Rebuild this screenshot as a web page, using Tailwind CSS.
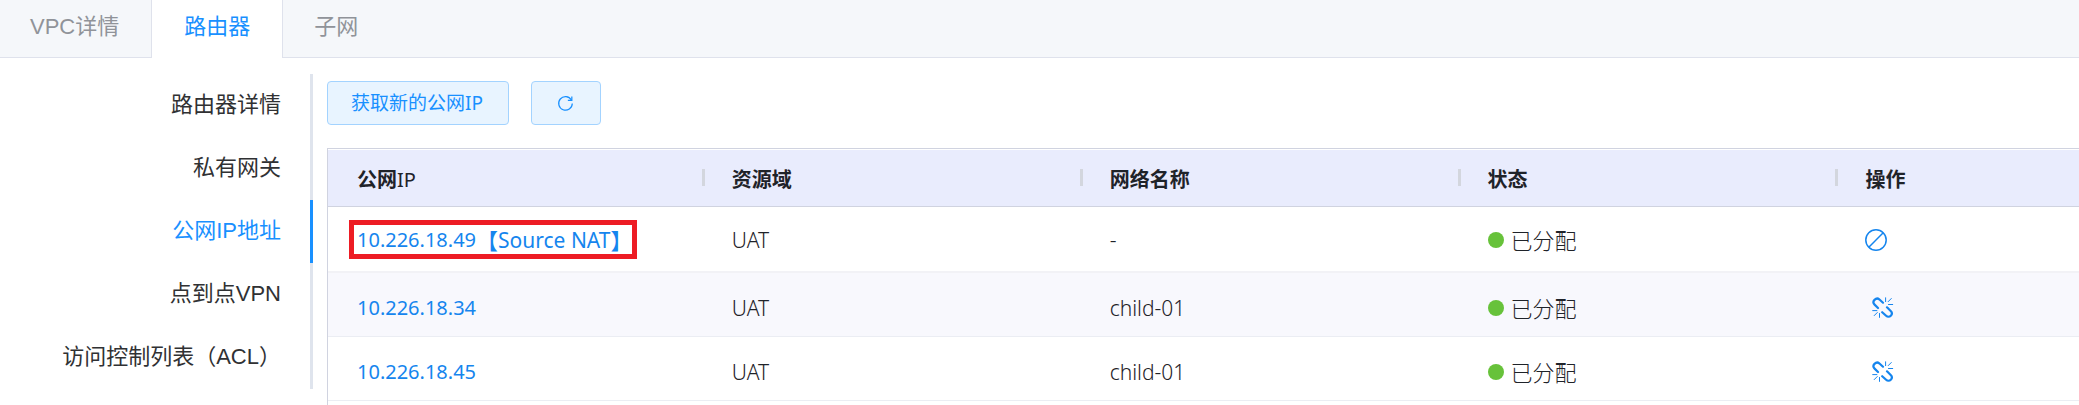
<!DOCTYPE html>
<html lang="zh-CN">
<head>
<meta charset="utf-8">
<meta name="viewport" content="width=device-width, initial-scale=1">
<title>VPC</title>
<script src="https://cdn.jsdelivr.net/npm/@tailwindcss/browser@4"></script>
</head>
<body class="bg-white">
<svg class="hidden" aria-hidden="true">
  <symbol id="unlink" viewBox="0 0 22 22">
    <g fill="none" stroke="currentColor" stroke-linecap="round">
      <path stroke-width="2.2" d="M6 11 2.600 7.600C1.200 6.200 1.200 4.200 2.500 2.900S5.900 1.200 7.200 2.300L11 5.700M15 10.300l3.700 3.700c1.400 1.400 1.400 3.400.1 4.700s-3.400 1.200-4.700 0L10.200 15.200"/>
      <path stroke-width="1" d="M13.600.8v3.800M19.300 1.500l-3.100 3.100M16.500 7.500h4.200M.7 13.600h4.200M5.300 15.500l-3.100 3.100M7.500 16.500v3.900"/>
    </g>
  </symbol>
</svg>
<div class="flex min-h-screen flex-col font-['Liberation_Sans','Noto_Sans_CJK_SC',sans-serif] text-[22px] leading-8">
  <nav class="flex h-[58px] bg-[#f5f7fa] text-[#909399]" aria-label="VPC">
    <a href="#vpc" class="border-b border-[#dfe2ec] pt-[11px] pr-8 pl-[30px]">VPC详情</a>
    <a href="#router" aria-current="page" class="border-x border-[#dfe2ec] bg-white px-8 pt-[11px] text-[#1890ff]">路由器</a>
    <a href="#subnet" class="flex-1 border-b border-[#dfe2ec] pt-[11px] pl-[31px]">子网</a>
  </nav>
  <div class="flex flex-1">
    <aside class="mt-4 w-[313px] shrink-0 self-start text-right text-[#303133]">
      <ul>
        <li><a href="#detail" class="block h-[63px] border-r-3 border-[#dfe4ed] pt-[15px] pr-[29px]">路由器详情</a></li>
        <li><a href="#gateway" class="block h-[63px] border-r-3 border-[#dfe4ed] pt-[15px] pr-[29px]">私有网关</a></li>
        <li><a href="#ip" aria-current="page" class="block h-[63px] border-r-3 border-[#1890ff] pt-[15px] pr-[29px] text-[#1890ff]">公网IP地址</a></li>
        <li><a href="#vpn" class="block h-[63px] border-r-3 border-[#dfe4ed] pt-[15px] pr-[29px]">点到点VPN</a></li>
        <li><a href="#acl" class="block h-[63px] border-r-3 border-[#dfe4ed] pt-[15px] pr-[29px]">访问控制列表（ACL）</a></li>
      </ul>
    </aside>
    <main class="flex min-w-0 flex-1 flex-col pt-[23px] pl-[14px] font-['Noto_Sans','Noto_Sans_CJK_SC',sans-serif] text-[#1f2329]">
      <div class="flex gap-[22px] text-[19px] text-[#1890ff]">
        <button type="button" class="h-11 rounded border border-[#a3d3ff] bg-[#e8f4ff] pr-[25px] pl-[23px] leading-6">获取新的公网IP</button>
        <button type="button" aria-label="刷新" class="flex h-11 w-[70px] items-center justify-center rounded border border-[#a3d3ff] bg-[#e8f4ff]">
          <svg class="size-[17px]" viewBox="0 0 18 18" fill="none" stroke="currentColor" stroke-width="1.300"><path d="M15.200 5.200A7.200 7.200 0 1 0 16.200 9"/><path d="M15.700 1.600v4.200h-4.200"/></svg>
        </button>
      </div>
      <div class="mt-[23px] flex-1 border-t border-l border-[#d0d3e0] pt-px">
        <table class="w-full table-fixed text-left text-[21px]">
          <colgroup><col class="w-[21.58%]"><col class="w-[21.58%]"><col class="w-[21.58%]"><col class="w-[21.58%]"><col></colgroup>
          <thead>
            <tr class="h-14 border-b border-[#d0d3e0] bg-[#e9ecfd] text-xl leading-6">
              <th scope="col" class="pr-px pl-[29px]"><div class="flex items-center justify-between"><span class="pt-1">公网<span class="font-normal">IP</span></span><span class="h-[17px] w-[3px] bg-[#d3d6de]"></span></div></th>
              <th scope="col" class="pr-px pl-[26px]"><div class="flex items-center justify-between"><span class="pt-1">资源域</span><span class="h-[17px] w-[3px] bg-[#d3d6de]"></span></div></th>
              <th scope="col" class="pr-px pl-[26px]"><div class="flex items-center justify-between"><span class="pt-1">网络名称</span><span class="h-[17px] w-[3px] bg-[#d3d6de]"></span></div></th>
              <th scope="col" class="pr-px pl-[26px]"><div class="flex items-center justify-between"><span class="pt-1">状态</span><span class="h-[17px] w-[3px] bg-[#d3d6de]"></span></div></th>
              <th scope="col" class="pl-[26px]"><span class="block pt-1">操作</span></th>
            </tr>
          </thead>
          <tbody class="leading-[22px] font-light">
            <tr class="h-[66px] border-b-2 border-[#f2f2f6]">
              <td class="pl-[29px] font-normal text-[#1585ee]"><a href="#ip49" class="inline-flex h-[23px] align-middle leading-6 whitespace-nowrap outline-5 outline-offset-3 outline-[#ed1c24]"><span class="text-xl leading-6">10.226.18.49</span><span class="text-[22px]">【</span>Source NAT<span class="-mr-1 text-[22px]">】</span></a></td>
              <td class="pt-0.5 pl-[26px]">UAT</td>
              <td class="pt-0.5 pl-[26px]">-</td>
              <td class="pt-0.5 pl-[26px]"><div class="flex items-center gap-[7px] text-[22px]"><span class="size-4 rounded-full bg-[#67c23a]"></span>已分配</div></td>
              <td class="pt-0.5 pl-[26px] text-[#1585ee]"><button type="button" aria-label="禁用" class="block"><svg class="size-[22px]" viewBox="0 0 22 22" fill="none" stroke="currentColor" stroke-width="1.500"><circle cx="11" cy="11" r="10.200"/><path d="M3.800 18.200 18.200 3.800"/></svg></button></td>
            </tr>
            <tr class="h-16 border-b border-[#ebedf3] bg-[#f8f8fd]">
              <td class="pt-[7px] pl-[29px] text-xl font-normal"><a href="#ip34" class="text-[#1585ee]">10.226.18.34</a></td>
              <td class="pt-[7px] pl-[26px]">UAT</td>
              <td class="pt-[7px] pl-[26px]">child-01</td>
              <td class="pt-[7px] pl-[26px]"><div class="flex items-center gap-[7px] text-[22px]"><span class="size-4 rounded-full bg-[#67c23a]"></span>已分配</div></td>
              <td class="pt-[7px] pl-[33px] text-[#1585ee]"><button type="button" aria-label="解绑" class="block"><svg class="size-[22px]"><use href="#unlink"/></svg></button></td>
            </tr>
            <tr class="h-16 border-b border-[#ebedf3]">
              <td class="pt-[7px] pl-[29px] text-xl font-normal"><a href="#ip45" class="text-[#1585ee]">10.226.18.45</a></td>
              <td class="pt-[7px] pl-[26px]">UAT</td>
              <td class="pt-[7px] pl-[26px]">child-01</td>
              <td class="pt-[7px] pl-[26px]"><div class="flex items-center gap-[7px] text-[22px]"><span class="size-4 rounded-full bg-[#67c23a]"></span>已分配</div></td>
              <td class="pt-[7px] pl-[33px] text-[#1585ee]"><button type="button" aria-label="解绑" class="block"><svg class="size-[22px]"><use href="#unlink"/></svg></button></td>
            </tr>
          </tbody>
        </table>
      </div>
    </main>
  </div>
</div>
</body>
</html>
